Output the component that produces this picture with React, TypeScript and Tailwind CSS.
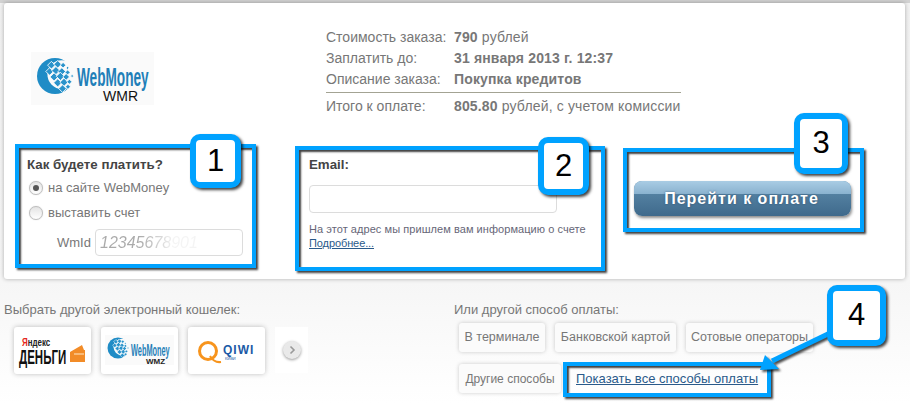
const Row = ({ label, children }: { label: string; children: React.ReactNode }) => (
  <div className="grid grid-cols-[128px_1fr] h-[21px] items-center whitespace-nowrap">
    <span>{label}</span>
    <span className="tracking-[.15px]">{children}</span>
  </div>
);

const Radio = ({ on, label }: { on?: boolean; label: string }) => (
  <div className="flex h-[25px] items-center gap-[5px] pl-[2px]">
    <span className="flex h-[14px] w-[14px] items-center justify-center rounded-full border border-[#bdbdbd] bg-gradient-to-b from-[#e4e4e4] to-white shadow-[0_0_1px_rgba(0,0,0,.25)]">
      {on && <span className="h-[6px] w-[6px] rounded-full bg-[#555]" />}
    </span>
    <span className="text-[13px] text-[#777]">{label}</span>
  </div>
);

const Mark = ({ className }: { className: string }) => (
  <div className={`absolute border-4 border-[#00a2ff] shadow-[2px_2px_2px_rgba(0,0,0,.75),inset_2px_2px_2px_rgba(0,0,0,.75)] ${className}`} />
);

const Badge = ({ n, className }: { n: number; className: string }) => (
  <div className={`absolute flex items-center justify-center rounded-[10px] border-[6px] border-[#00a2ff] bg-white text-[31px] text-black shadow-[2px_2px_3px_rgba(0,0,0,.75)] ${className}`}>
    {n}
  </div>
);

const Globe = ({ cx, cy, r }: { cx: number; cy: number; r: number }) => {
  const cells: [number, number, number][] = [
    [-0.2, -0.6, 0.15], [0.15, -0.65, 0.15], [0.45, -0.6, 0.11], [0.7, -0.45, 0.06],
    [-0.3, -0.25, 0.15], [0.05, -0.3, 0.16], [0.38, -0.25, 0.15], [0.7, -0.2, 0.1],
    [-0.05, 0.05, 0.16], [0.3, 0.02, 0.16], [0.62, 0.05, 0.13], [0.95, 0, 0.06],
    [0.15, 0.38, 0.16], [0.5, 0.35, 0.16], [0.8, 0.32, 0.1],
    [0.42, 0.7, 0.15], [0.72, 0.6, 0.1],
  ];
  return (
    <g>
      <circle cx={cx} cy={cy} r={r} fill="#1f8cc6" />
      <circle cx={cx + r * 0.38} cy={cy - r * 0.08} r={r * 0.8} fill="#fafafa" />
      {cells.map(([x, y, s], i) => (
        <rect
          key={i}
          x={cx + x * r - s * r}
          y={cy + y * r - s * r}
          width={s * r * 2}
          height={s * r * 2}
          fill="#2a93cb"
          stroke="#fff"
          strokeWidth={r > 12 ? 0.8 : 0.5}
          transform={`rotate(45 ${cx + x * r} ${cy + y * r})`}
        />
      ))}
    </g>
  );
};

const WalletCard = ({ children }: { children: React.ReactNode }) => (
  <div className="h-[47px] w-[77px] rounded-[3px] bg-white shadow-[0_0_5px_rgba(0,0,0,.25)]">{children}</div>
);

const PayBtn = ({ label, className }: { label: string; className: string }) => (
  <div className={`flex h-[29px] items-center justify-center rounded-[3px] bg-[#fbfbfb] text-[#777] shadow-[0_0_4px_rgba(0,0,0,.2)] ${className}`}>
    {label}
  </div>
);

export default function App() {
  return (
    <div className="relative h-[403px] w-[910px] overflow-hidden bg-gradient-to-b from-[#f1f1f1] via-[#f6f6f6] via-70% to-white pt-[3px] font-['Liberation_Sans',sans-serif] text-[14px] text-[#777]">
      <div className="absolute left-0 right-0 top-0 h-[3px] bg-[#d2d2d2]" />
      <main className="relative ml-[4px] h-[276px] w-[901px] rounded-[3px] bg-white shadow-[0_0_4px_rgba(0,0,0,.3)]">
        <div className="flex h-[152px]">
          <div className="ml-[27px] mt-[49px] h-[53px] w-[123px] shrink-0 bg-[#fafafa]">
            <svg width="123" height="53" viewBox="0 0 123 53">
              <Globe cx={24} cy={24} r={18} />
              <text transform="translate(46 34) scale(.545 1)" fontSize="25" fontWeight="700" fontFamily="Liberation Sans" fill="#1f7fb8">WebMoney</text>
              <text x="72" y="49" fontSize="14" fontFamily="Liberation Sans" fill="#111">WMR</text>
            </svg>
          </div>
          <div className="ml-[172px] w-[355px] pt-[24px]">
            <Row label="Стоимость заказа:"><b>790</b> рублей</Row>
            <Row label="Заплатить до:"><b>31 января 2013 г. 12:37</b></Row>
            <Row label="Описание заказа:"><b>Покупка кредитов</b></Row>
            <div className="mb-[3px] mt-[2px] h-px bg-[#a3a393]" />
            <Row label="Итого к оплате:"><b>805.80</b> рублей, с учетом комиссии</Row>
          </div>
        </div>
        <div className="flex pl-[23px]">
          <section className="w-[282px]">
            <h2 className="h-[20px] text-[13.3px] font-bold leading-[19px] text-[#444]">Как будете платить?</h2>
            <Radio on label="на сайте WebMoney" />
            <Radio label="выставить счет" />
            <div className="ml-[30px] mt-[4px] flex items-center gap-[4px]">
              <span className="w-[34px] text-[13px]">WmId</span>
              <div className="flex h-[27px] w-[148px] items-center rounded-[4px] border border-[#dcdcdc] px-[4px] text-[16px] italic">
                <span className="bg-gradient-to-r from-[#aaa] from-40% to-[#f4f4f4] to-75% bg-clip-text text-transparent">12345678901</span>
              </div>
            </div>
          </section>
          <section className="w-[325px]">
            <h2 className="h-[19px] text-[13.3px] font-bold leading-[19px] text-[#444]">Email:</h2>
            <div className="mt-[11px] h-[28px] w-[248px] rounded-[4px] border border-[#dcdcdc]" />
            <p className="mt-[9px] whitespace-nowrap text-[11px] leading-[14px] tracking-[.06px] text-[#667]">
              На этот адрес мы пришлем вам информацию о счете
              <br />
              <a className="tracking-[-.1px] text-[#2a5a8a] underline">Подробнее...</a>
            </p>
          </section>
          <section className="pt-[26px]">
            <button className="relative h-[35px] w-[217px] overflow-hidden rounded-[8px] bg-gradient-to-b from-[#5f8dad] to-[#3f6a8c] text-[16px] font-bold tracking-[1px] text-white shadow-[1px_2px_3px_rgba(0,0,0,.45)] [text-shadow:0_0_2px_rgba(40,70,100,.8)]">
              <span className="absolute inset-x-0 top-0 h-[13px] bg-gradient-to-b from-[#a9cce4] to-[#8ab2cf]" />
              <span className="relative -left-[1px]">Перейти к оплате</span>
            </button>
          </section>
        </div>
      </main>

      <div className="flex pl-[4px] pt-[21px]">
        <section className="w-[450px]">
          <h2 className="h-[20px] text-[13px] leading-[20px] text-[#777]">Выбрать другой электронный кошелек:</h2>
          <div className="ml-[10px] mt-[7px] flex items-start gap-[10px]">
            <WalletCard>
              <svg width="77" height="47" viewBox="0 0 77 47">
                <text transform="translate(8 19) scale(.72 1)" fontSize="11" fontWeight="700" fontFamily="Liberation Sans">
                  <tspan fill="#e52620">Я</tspan><tspan fill="#222">ндекс</tspan>
                </text>
                <text transform="translate(5 37) scale(.575 1)" fontSize="20" fontWeight="700" fontFamily="Liberation Sans" fill="#111">ДЕНЬГИ</text>
                <path d="M56 25 L68 18 L70 23 L71 23 Q71 23 71 24 L71 35 L56 35 Z" fill="#f28c28" />
                <path d="M60 26 L70 26 L70 28 L60 28 Z" fill="#fbd9ae" opacity=".6" />
              </svg>
            </WalletCard>
            <WalletCard>
              <svg width="77" height="47" viewBox="0 0 77 47">
                <rect x="4" y="8" width="69" height="30" fill="#fafafa" />
                <Globe cx={17} cy={21} r={10.5} />
                <text transform="translate(30 29) scale(.46 1)" fontSize="16" fontWeight="700" fontFamily="Liberation Sans" fill="#1f7fb8">WebMoney</text>
                <text x="45" y="37" fontSize="8" fontWeight="700" fontFamily="Liberation Sans" fill="#222">WMZ</text>
              </svg>
            </WalletCard>
            <WalletCard>
              <svg width="77" height="47" viewBox="0 0 77 47">
                <circle cx="20" cy="24" r="8.5" fill="none" stroke="#f7941d" strokeWidth="3" />
                <path d="M22 29 Q26 36 33 35" fill="none" stroke="#f7941d" strokeWidth="2" />
                <text x="35" y="27" fontSize="12" fontWeight="700" letterSpacing="1" fontFamily="Liberation Sans" fill="#1c5aa6">QIWI</text>
                <text x="37" y="33" fontSize="4" fontFamily="Liberation Sans" fill="#1c5aa6">КИВИ</text>
              </svg>
            </WalletCard>
            <div className="flex h-[46px] w-[33px] items-center justify-center bg-white">
              <span className="flex h-[18px] w-[18px] items-center justify-center rounded-full bg-[#e9e9e9] shadow-[0_1px_3px_rgba(0,0,0,.4)]">
                <svg width="8" height="10" viewBox="0 0 8 10">
                  <path d="M2.5 1.5 L6 5 L2.5 8.5" fill="none" stroke="#999" strokeWidth="1.6" />
                </svg>
              </span>
            </div>
          </div>
        </section>
        <section>
          <h2 className="h-[20px] text-[13px] leading-[20px] text-[#777]">Или другой способ оплаты:</h2>
          <div className="ml-[5px] mt-[3px] flex gap-[10px] whitespace-nowrap text-[12.5px]">
            <PayBtn label="В терминале" className="w-[86px]" />
            <PayBtn label="Банковской картой" className="w-[121px]" />
            <PayBtn label="Сотовые операторы" className="w-[127px]" />
          </div>
          <div className="ml-[5px] mt-[12px] flex items-center whitespace-nowrap text-[12px]">
            <PayBtn label="Другие способы" className="w-[102px]" />
            <a className="ml-[15px] text-[13px] text-[#2a5a8a] underline">Показать все способы оплаты</a>
          </div>
        </section>
      </div>

      <Mark className="left-[15px] top-[144px] h-[124px] w-[241px]" />
      <Mark className="left-[295px] top-[146px] h-[125px] w-[310px]" />
      <Mark className="left-[623px] top-[148px] h-[84px] w-[241px]" />
      <Mark className="left-[563px] top-[362px] h-[35px] w-[208px]" />

      <svg className="absolute left-0 top-0 drop-shadow-[2px_2px_1px_rgba(0,0,0,.7)]" width="910" height="403" viewBox="0 0 910 403">
        <path d="M830 333 L772 361" stroke="#00a2ff" strokeWidth="5" />
        <path d="M760 370 L765 355 L779 369 Z" fill="#00a2ff" />
      </svg>

      <Badge n={1} className="left-[190px] top-[134px] h-[54px] w-[51px]" />
      <Badge n={2} className="left-[538px] top-[137px] h-[58px] w-[51px]" />
      <Badge n={3} className="left-[794px] top-[113px] h-[61px] w-[54px]" />
      <Badge n={4} className="left-[827px] top-[285px] h-[61px] w-[59px]" />
    </div>
  );
}
